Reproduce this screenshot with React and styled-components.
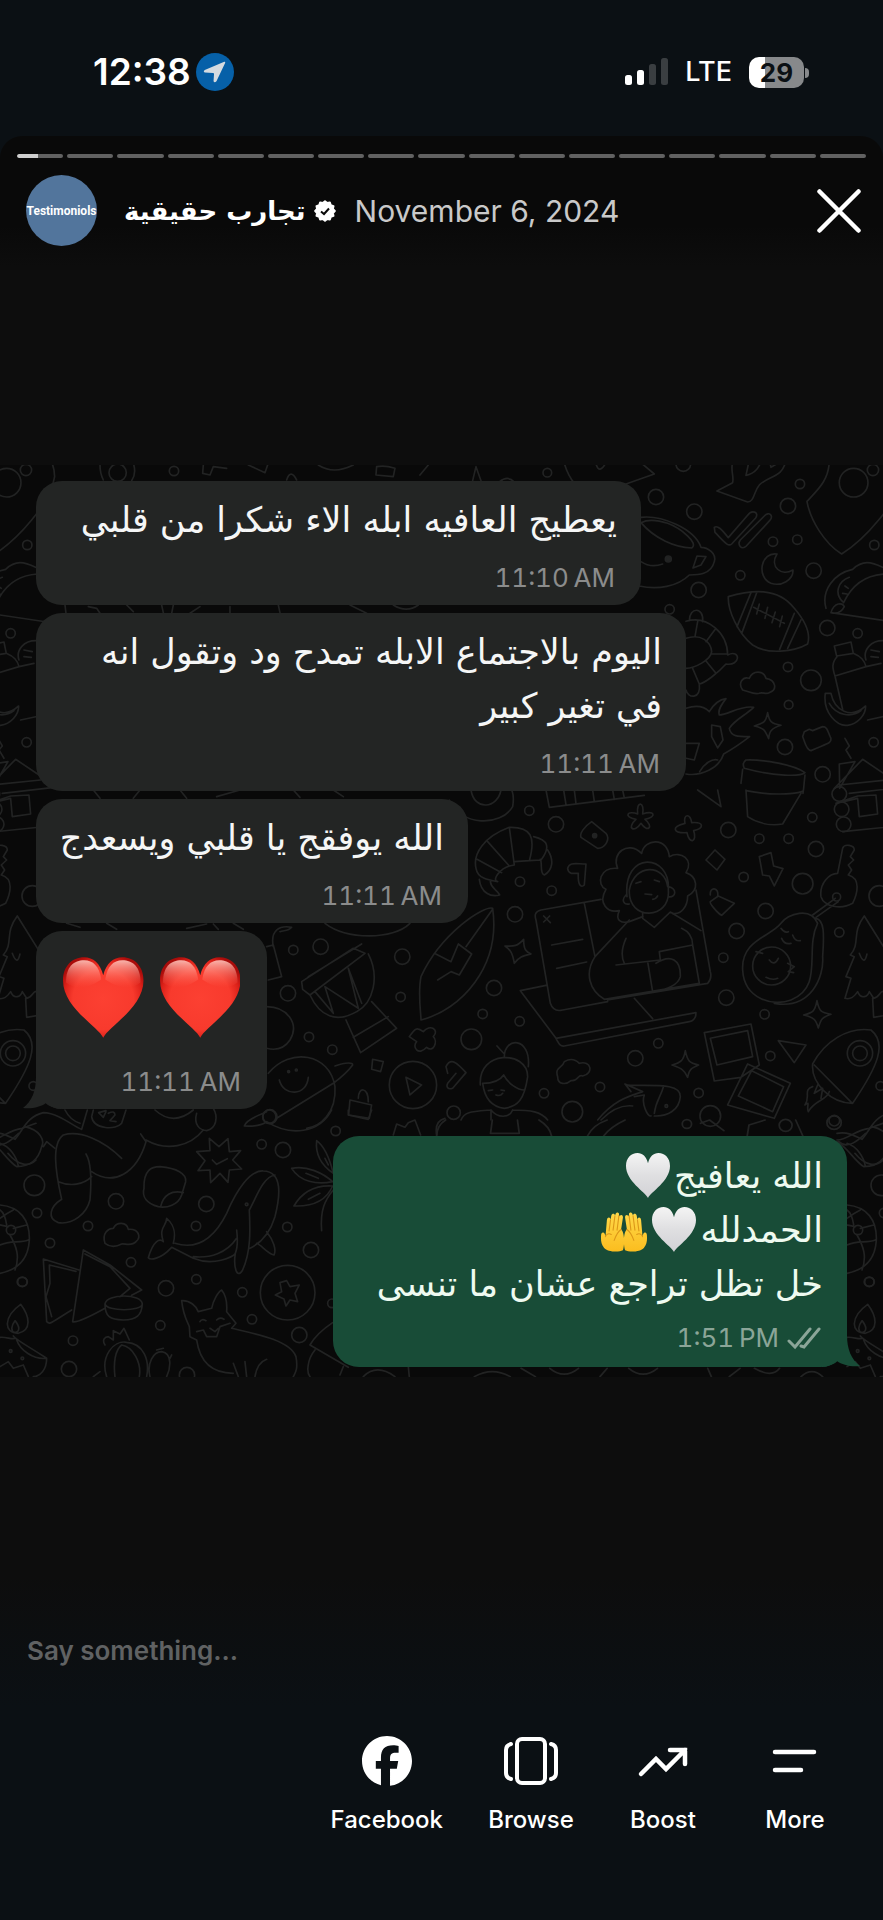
import { useState } from "react";
import styled, { createGlobalStyle } from "styled-components";
import { FaFacebook } from "react-icons/fa6";

const GlobalStyle = createGlobalStyle`
  * {
    box-sizing: border-box;
  }

  body {
    margin: 0;
    background-color: #0b1014;
    color: #ffffff;
    font-family: Inter, "DejaVu Sans", sans-serif;
  }

  button {
    padding: 0;
    border: none;
    background: none;
    color: inherit;
    font: inherit;
    cursor: pointer;
  }
`;

const Page = styled.div`
  display: flex;
  flex-direction: column;
  min-height: 100vh;
`;

const StatusBar = styled.header`
  display: flex;
  justify-content: space-between;
  align-items: center;
  height: 136px;
  padding: 8px 79px 0 93px;
`;

const StatusGroup = styled.div`
  display: flex;
  align-items: center;
  gap: ${({ $gap }) => $gap}px;
`;

const Clock = styled.time`
  font-size: 37px;
  font-weight: 600;
  line-height: 40px;
`;

const Network = styled.span`
  font-size: 27px;
  font-weight: 500;
  line-height: 32px;
`;

const Battery = styled.div`
  position: relative;
  width: 55px;
  height: 31px;
  border-radius: 10px;
  background: linear-gradient(to right, #ffffff 29%, #87898b 29%);
  color: #0b1014;
  font-size: 26px;
  font-weight: 700;
  line-height: 31px;
  text-align: center;

  &::after {
    content: "";
    position: absolute;
    top: 11px;
    right: -5px;
    width: 4px;
    height: 10px;
    border-radius: 0 5px 5px 0;
    background-color: #87898b;
  }
`;

const Story = styled.main`
  display: flex;
  flex: 1;
  flex-direction: column;
  border-radius: 22px 22px 0 0;
  background: linear-gradient(#090909 0, #090909 90px, #0d0d0d 130px, #0d0d0d calc(100% - 130px), #0b1014 100%);
`;

const Progress = styled.div`
  display: flex;
  gap: 4px;
  padding: 18px 17px 0;
`;

const Segment = styled.div`
  flex: 1;
  height: 4px;
  border-radius: 2px;
  background-color: #616161;
  overflow: hidden;
`;

const SegmentFill = styled.div`
  height: 100%;
  border-radius: 2px 0 0 2px;
  background-color: #cfcfcf;
`;

const StoryHeader = styled.div`
  display: flex;
  align-items: center;
  padding: 17px 22px 0 26px;
`;

const Avatar = styled.div`
  display: flex;
  justify-content: center;
  align-items: center;
  width: 71px;
  height: 71px;
  margin-right: 27px;
  border-radius: 50%;
  background-color: #52759c;
  font-family: Roboto, sans-serif;
  font-size: 12px;
  font-weight: 700;
`;

const Author = styled.h1`
  display: flex;
  align-items: center;
  gap: 8px;
  margin: 0 19px 0 0;
  font-family: "DejaVu Sans", sans-serif;
  font-size: 26px;
  font-weight: 700;
  line-height: 40px;
`;

const StoryDate = styled.time`
  flex: 1;
  color: #c9c9c9;
  font-size: 30px;
  line-height: 40px;
`;

const CloseButton = styled.button`
  width: 44px;
  height: 44px;
`;

const Stage = styled.section`
  display: flex;
  flex: 1;
  flex-direction: column;
  justify-content: center;
`;

const Chat = styled.div`
  position: relative;
  display: flex;
  flex-direction: column;
  align-items: flex-start;
  gap: 8px;
  padding: 16px 36px 10px;
  background-color: #090909;
  overflow: hidden;
`;

const Wallpaper = styled.svg`
  position: absolute;
  inset: 0;
  width: 100%;
  height: 100%;
`;

const Bubble = styled.article`
  position: relative;
  display: flex;
  flex-direction: column;
  width: ${({ $width }) => $width}px;
  max-width: 100%;
  margin-top: ${({ $mine }) => ($mine ? 19 : 0)}px;
  align-self: ${({ $mine }) => ($mine ? "flex-end" : "flex-start")};
  padding: ${({ $mine }) => ($mine ? "13px 24px 11px" : "12px 24px 9px")};
  border-radius: 26px;
  background-color: ${({ $mine }) => ($mine ? "#184c37" : "#232524")};
  color: ${({ $mine }) => ($mine ? "#eefaf0" : "#f5f6f6")};
`;

const Line = styled.p`
  height: 54px;
  margin: 0;
  font-family: "DejaVu Sans", sans-serif;
  font-size: 35px;
  line-height: 54px;
  white-space: nowrap;
`;

const HeartRow = styled.div`
  display: flex;
  gap: 16px;
  padding: 14px 3px 13px;
`;

const Meta = styled.div`
  display: flex;
  justify-content: flex-end;
  align-items: center;
  gap: 8px;
  padding: ${({ $mine }) => ($mine ? 9 : 13)}px 2px 0;
  color: ${({ $mine }) => ($mine ? "#8ba598" : "#8b8c8c")};
  font-size: 26px;
  line-height: 36px;
  font-variant-numeric: tabular-nums;
`;

const Tail = styled.svg`
  position: absolute;
  bottom: 0;
  ${({ $mine }) => ($mine ? "right: -13px; transform: scaleX(-1);" : "left: -13px;")}
`;

const InlineEmoji = styled.svg`
  margin-right: 4px;
  vertical-align: -10px;
`;

const Composer = styled.form`
  display: flex;
  align-items: center;
  height: 110px;
  padding: 0 27px;

  input {
    width: 100%;
    padding: 0;
    border: none;
    outline: none;
    background: none;
    color: #ffffff;
    font: 600 26px/36px Inter, sans-serif;
  }

  input::placeholder {
    color: #606263;
    opacity: 1;
  }
`;

const Toolbar = styled.nav`
  display: flex;
  justify-content: flex-end;
  align-items: flex-start;
  height: 214px;
  padding: 29px 22px 0;
`;

const ToolButton = styled.button`
  display: flex;
  flex-direction: column;
  align-items: center;
  gap: 17px;
  min-width: 132px;
  padding: 0 22px;

  span {
    font-size: 24px;
    font-weight: 500;
    line-height: 32px;
  }
`;

const ToolIcon = styled.div`
  display: flex;
  justify-content: center;
  align-items: center;
  height: 52px;
`;

const HEART =
  "M40 80C35 69 0 50 0 23C0 9 9 0 21 0C30 0 37 6 40 18C43 6 50 0 59 0C71 0 80 9 80 23C80 50 45 69 40 80Z";

const badgePoints = Array.from({ length: 24 }, (_, i) => {
  const angle = (i * Math.PI) / 12;
  const r = i % 2 ? 8.2 : 9.8;
  return `${11 + r * Math.cos(angle)},${11 + r * Math.sin(angle)}`;
}).join(" ");

const RedHeart = () => (
  <svg width="81" height="81" viewBox="0 0 80 80" role="img" aria-label="❤️">
    <defs>
      <radialGradient id="heartBody" cx="50%" cy="52%" r="58%">
        <stop offset="0" stopColor="#fc4032" />
        <stop offset="0.65" stopColor="#f83a2d" />
        <stop offset="0.85" stopColor="#dc2119" />
        <stop offset="1" stopColor="#a90c0a" />
      </radialGradient>
      <linearGradient id="heartShine" x1="0" y1="0" x2="0" y2="1">
        <stop offset="0" stopColor="#ffc6bd" stopOpacity="0.9" />
        <stop offset="1" stopColor="#ff6a59" stopOpacity="0" />
      </linearGradient>
    </defs>
    <path d={HEART} fill="url(#heartBody)" />
    <path d="M3 25C3 9 11 3 21 3C30 3 36 9 38 22C28 29 14 34 3 25Z" fill="url(#heartShine)" />
    <path d="M77 25C77 9 69 3 59 3C50 3 44 9 42 22C52 29 66 34 77 25Z" fill="url(#heartShine)" />
  </svg>
);

const WhiteHeart = () => (
  <InlineEmoji width="44" height="45" viewBox="0 0 80 80" preserveAspectRatio="none" role="img" aria-label="🤍">
    <defs>
      <linearGradient id="whiteHeart" x1="0" y1="0" x2="0" y2="1">
        <stop offset="0" stopColor="#f4f4f4" />
        <stop offset="0.5" stopColor="#dfdfe1" />
        <stop offset="1" stopColor="#d2d2d6" />
      </linearGradient>
    </defs>
    <path d={HEART} fill="url(#whiteHeart)" />
  </InlineEmoji>
);

const Hands = () => (
  <InlineEmoji width="48" height="40" viewBox="0 0 130 110" role="img" aria-label="🤲">
    <defs>
      <linearGradient id="skin" x1="0" y1="0" x2="0" y2="1">
        <stop offset="0" stopColor="#ffd94a" />
        <stop offset="1" stopColor="#fbbd1f" />
      </linearGradient>
      <g id="hand">
        <path
          d="M62 105C50 111 20 110 10 98C2 88 1 78 2 64C2 56 8 53 12 60L14 68L18 22C19 13 28 13 28 22L30 10C32 2 41 3 40 11L42 5C46-2 53 1 51 9L53 12C56 6 63 8 62 16L57 48C67 55 67 92 62 105Z"
          fill="url(#skin)"
        />
        <path
          d="M28 22L24 52M40 11L35 50M51 10L46 50M14 68C16 60 24 58 30 62M57 48C47 55 42 66 38 78"
          fill="none"
          stroke="#dc9719"
          strokeWidth="3"
          strokeLinecap="round"
        />
      </g>
    </defs>
    <use href="#hand" />
    <use href="#hand" transform="translate(130 0) scale(-1 1)" />
  </InlineEmoji>
);

// the groups are sketched at 3x, the tile repeats every 847px
const upperDots = [
  [319, 38, 13], [645, 111, 23], [760, 155, 23], [1041, 138, 23], [1077, 72, 14], [996, 245, 14],
  [1069, 239, 14], [898, 346, 14], [1118, 332, 23], [773, 390, 23], [686, 448, 14], [1159, 504, 23],
  [1250, 520, 14], [1041, 621, 14], [1110, 661, 31], [1043, 734, 13], [1032, 861, 23], [1298, 847, 14],
  [1145, 943, 23], [1300, 255, 14], [1238, 68, 43], [1296, 30, 17], [727, 12, 22],
];

const middleDots = [
  [265, 62, 14], [345, 103, 23], [237, 275, 14], [332, 302, 14], [222, 373, 23], [159, 594, 23],
  [125, 672, 14], [236, 694, 14], [91, 748, 31], [862, 120, 23], [955, 146, 14], [1043, 146, 14],
  [1114, 82, 14], [1125, 177, 23], [908, 261, 14], [1085, 281, 31], [1315, 318, 31], [974, 363, 23],
  [887, 423, 23], [847, 503, 14], [1195, 427, 14], [856, 623, 23], [971, 673, 14], [583, 805, 23],
  [652, 760, 14], [477, 891, 14], [309, 910, 14], [394, 965, 31], [773, 909, 14], [808, 978, 31],
  [988, 798, 14], [1318, 888, 13], [1180, 992, 16],
];

const leftDots = [
  [962, 470, 23], [880, 480, 14], [864, 610, 23], [1207, 500, 23], [1202, 621, 14],
  [927, 741, 14], [997, 779, 14],
];

const lowerDots = [
  [103, 226, 31], [348, 274, 23], [111, 309, 14], [264, 348, 14], [150, 399, 14], [67, 515, 14],
  [393, 457, 14], [619, 282, 23], [588, 348, 14], [785, 103, 14], [849, 120, 23], [1007, 63, 14],
  [862, 351, 14], [933, 420, 23], [498, 535, 23], [589, 508, 14], [727, 547, 14], [756, 628, 14],
  [481, 646, 14], [219, 692, 14], [207, 777, 23], [898, 675, 23], [561, 795, 23], [996, 580, 13],
];

const Dots = ({ items }) => items.map(([x, y, r]) => <circle key={`${x}-${y}`} cx={x} cy={y} r={r} />);

const Doodles = () => (
  <Wallpaper viewBox="0 465 883 912" preserveAspectRatio="xMidYMin slice" aria-hidden="true">
    <defs>
      <g id="doodles" fill="none" stroke="#222323" strokeWidth="5" strokeLinecap="round" strokeLinejoin="round">
        <g transform="translate(441 460) scale(.3333)">
          <Dots items={upperDots} />
          <path d="M1165 0C1165 60 1130 90 1098 124C1108 180 1150 250 1202 282C1270 240 1370 130 1382 50C1382 20 1370 0 1360-10" />
          <path d="M878 0C865 25 880 45 875 68L828 93L920 126C940 126 938 95 955 75C985 45 1025 55 1035 0M925 0L915 46C945 40 955 20 965-5M985 0L990 22L1010 10" />
          <path d="M95 62L105 20L120 62M370 10Q380 45 400 70M465 12Q475 45 495 8M590 0L640 42L555 72M175 66Q200 45 220 66" />
          <path d="M600 172C660 165 760 205 780 262C800 262 828 280 820 305C810 345 770 345 745 345C710 380 650 390 595 378M600 188C640 235 700 262 752 264C775 250 720 205 680 190C650 180 620 178 600 188M768 288L795 290L780 315L756 324ZM600 305Q630 325 665 312" />
          <circle cx="682" cy="297" r="9" fill="#222323" />
          <path d="M820 202C830 195 842 208 862 233L920 166C932 148 956 156 944 174L872 252C862 262 850 246 822 217ZM898 240L970 168C984 152 1000 168 986 182L916 258C902 272 888 255 898 240Z" />
          <path d="M1008 282C960 275 945 350 990 370C1020 380 1058 360 1056 330C1020 350 985 320 1008 282Z" />
          <path d="M862 410C930 390 1010 380 1060 445C1090 480 1110 520 1100 552C1060 575 980 585 935 555C890 520 860 450 862 410ZM930 398L888 500M948 396L903 518M1060 460L1016 568M1080 480L1040 565M938 442L1030 490M955 432L947 462M980 442L972 475M1003 456L993 488M1024 468L1016 500" />
          <path d="M1155 445C1140 390 1180 340 1235 328C1265 300 1290 305 1325 322M1170 458L1400 492M1170 458C1180 425 1205 428 1210 440C1200 460 1185 462 1170 458M1208 428C1235 370 1280 345 1330 342M1205 425C1180 400 1190 365 1225 352M1212 378L1222 385M1205 400L1218 402" />
          <path d="M1180 558L1230 546L1237 580L1187 588ZM1190 588C1170 610 1175 625 1182 648L1205 748M1237 580C1260 590 1270 600 1275 620L1182 648M1275 620L1320 610M1275 600C1265 570 1290 540 1330 542M1290 570L1315 575M1290 590L1312 592" />
          <path d="M1153 700C1145 760 1190 800 1220 796C1250 792 1275 765 1274 738C1230 780 1180 750 1170 700ZM1165 730C1185 765 1230 775 1260 752M1280 780L1350 765" />
          <path d="M745 482C745 440 790 440 785 485M735 484C800 465 860 520 860 585C900 565 900 620 855 612C830 640 790 670 775 672C780 720 740 715 735 690M735 535C780 520 810 545 812 575C810 600 760 625 735 625M770 485L762 530M825 505L795 545M860 582L812 582M825 640L795 603M775 672L755 625" />
          <path d="M905 690C890 670 905 648 925 655C935 630 968 630 975 655C1005 660 1010 690 985 698C975 705 965 695 955 700C940 705 925 695 905 690Z" />
          <path d="M735 745C765 735 790 740 805 755C820 730 840 718 855 716C840 735 830 750 835 765C860 765 900 735 938 742C915 765 880 780 865 805C870 830 890 830 926 830C900 850 870 870 848 882C835 925 780 950 735 942M812 795L838 800L846 840L830 864L812 830ZM735 850L775 850L760 900L735 895M776 935C790 910 815 895 830 900" />
          <path d="M980 758C985 785 990 790 1020 796C990 805 985 815 983 836C972 810 970 805 940 798C970 790 975 785 980 758Z" />
          <path d="M1090 815L1105 808L1115 812L1145 800C1160 800 1160 815 1170 835C1172 850 1160 850 1110 872C1095 872 1090 840 1085 830ZM1212 835L1225 858L1215 870L1230 895" />
          <path d="M915 900C970 898 1060 915 1092 938C1080 950 1000 950 910 925C905 915 908 905 915 900ZM905 928L900 970M1092 945L1088 985L1086 1000M1195 912L1242 905L1196 985ZM1180 985L1265 898L1350 955M1195 975L1340 960" />
        </g>
        <g transform="translate(441 790) scale(.3333)">
          <Dots items={middleDots} />
          <path d="M25 30C60 110 180 110 215 50C220 20 215 0 205-10M90 0C100 65 170 55 180 0M315 0L325 52L610 16M368 0L375 44M400 0L405 40M455 0L460 34M515 0L520 28M545 0L550 24M770 0L840 50L830 0" />
          <path d="M915 0L920 80C950 100 990 108 1025 102L1080 10M915 2C980 15 1050 15 1085 4" />
          <path d="M105 235C95 190 130 140 205 112L220 225L205 228C180 235 150 270 170 275C140 270 110 265 105 235ZM205 112C270 110 285 140 265 212L220 215M278 140C320 150 330 170 300 210L265 212M320 180C340 210 335 240 310 255C295 250 305 220 298 208M140 155L205 228M108 208L182 248M115 268C120 310 150 322 176 315C165 295 150 295 148 275" />
          <path d="M452 95L495 130C510 150 490 175 470 175L420 142C415 130 430 110 452 95ZM590 72C585 30 612 35 605 72C640 60 650 80 612 88C640 110 620 130 600 100C580 130 555 115 585 88C545 80 560 60 590 72ZM732 100C725 70 750 70 752 98C790 95 790 115 758 122C770 155 745 165 738 128C695 130 690 110 732 100Z" />
          <circle cx="461" cy="137" r="6" fill="#222323" />
          <path d="M795 210L822 180L852 208L828 240ZM955 200L990 188L998 228L1026 236L1000 288L985 258L965 255ZM380 235C385 215 405 222 435 222L430 285C420 295 410 285 412 250L390 250Q380 245 380 235M808 315C805 290 835 290 830 318M832 318L880 340L842 376C830 370 805 340 808 335ZM1190 250L1205 175C1210 160 1240 165 1240 180L1228 200L1238 210L1222 225L1232 240L1222 255C1260 265 1250 310 1235 340C1200 360 1150 350 1140 320C1135 280 1165 250 1190 250ZM1183 325L1115 375M1192 335L1125 382" />
          <circle cx="1187" cy="321" r="12" />
          <path d="M530 235C510 190 560 150 602 190C610 145 680 140 685 200C720 180 760 210 735 248C770 260 775 300 740 318C740 350 720 375 695 370M530 235C475 230 465 285 495 298C470 340 500 370 535 362C520 395 545 400 565 395L605 380" />
          <path d="M558 320C545 180 690 190 682 300C690 390 560 395 565 300C580 220 670 220 680 290M555 315C540 330 548 345 565 342M682 290C710 295 705 325 682 320M612 312L632 314M635 328Q645 328 650 318M585 280L600 275M640 270L655 275M605 368L605 385L640 412L688 366L780 422M565 390L462 500C430 550 445 600 490 628L775 580L755 465L655 485L658 510L525 525M555 445Q535 490 550 520M620 515L635 605M722 415Q755 430 755 465M645 520C690 490 720 510 718 560C710 590 670 600 635 605M500 630L800 580C810 570 812 560 808 545L765 300M480 328L300 360C282 365 280 375 285 390L328 640C335 660 350 664 365 660L500 635M430 340L462 500M332 465L425 448M347 535L437 516M308 378L328 398M308 396L326 378M315 586L238 602L345 745L765 668C765 680 762 692 745 695L370 768C360 770 355 765 345 745M580 625L635 686" />
          <path d="M155 355C130 345 0 430 -60 560C-70 610-60 670-60 690C60 660 180 530 155 355ZM155 358L75 470M-10 570L30 545L55 555L92 492L52 462L30 515L-20 490" />
          <path d="M248 448C248 480 255 485 270 492C245 498 235 500 220 520C215 492 210 480 192 468C220 470 230 468 248 448ZM733 782C740 815 745 818 773 825C750 835 745 838 740 862C730 838 720 835 693 825C720 818 728 812 733 782ZM1128 632C1135 665 1140 668 1170 673C1142 682 1140 688 1132 714C1125 688 1118 682 1088 675C1115 668 1122 665 1128 632Z" />
          <path d="M1130 400C1110 350 1040 370 1020 400C990 440 900 450 905 540C910 630 1000 650 1050 630C1150 590 1090 480 1130 400ZM1125 385C1150 390 1150 430 1145 500C1150 560 1110 660 1000 640M1020 415Q1030 430 1042 425M1022 445Q1030 465 1050 460M1055 435Q1062 455 1078 452M985 510Q1000 530 1012 505M975 562Q995 572 1010 565M945 485L965 490M1040 520L1060 530L1042 545L1058 548" />
          <circle cx="992" cy="528" r="57" />
          <path d="M1270 378C1230 430 1260 460 1228 495L1240 500L1215 560L1230 565L1212 625C1230 630 1240 620 1250 605C1260 630 1280 620 1285 605L1298 625C1320 620 1315 600 1330 605L1345 625C1360 620 1365 600 1380 600L1350 560L1360 550L1330 500L1340 490ZM1255 490Q1270 530 1278 492M1295 625L1298 682L1370 670" />
          <path d="M790 728L930 702L955 825L900 862L820 873ZM808 745L920 722L935 800L828 825ZM920 822L1048 880L1000 985L860 945ZM932 842L1028 890L995 965L892 918ZM1012 752L1095 765L1060 818Z" />
          <path d="M1115 822C1150 755 1220 710 1290 720C1340 760 1310 830 1235 940C1170 940 1110 880 1115 822ZM1120 825L1232 938M1115 890C1085 900 1110 920 1092 945C1110 930 1095 950 1102 965C1120 930 1160 930 1165 905M1130 885L1120 910L1145 895L1140 925" />
          <circle cx="1257" cy="790" r="38" />
          <circle cx="1257" cy="790" r="22" />
          <path d="M350 860C340 830 365 835 370 815C395 800 410 815 415 820C450 810 460 850 425 858C410 850 415 875 390 872C375 885 350 885 350 860ZM190 800C190 740 270 740 262 830M168 768L188 790M118 885C110 780 260 780 260 860C250 930 230 950 190 955C150 950 130 920 125 880C150 880 175 875 188 855C200 880 230 900 250 900M165 915Q178 920 185 910M142 902L155 900M180 900L190 902M150 960C170 985 205 985 215 960M60 990C70 965 90 965 150 960L150 990M215 960C270 960 300 965 320 990M20 850L15 830C30 800 50 820 75 848L35 895C20 900 15 890 20 880L45 850" />
          <path d="M470 990C520 930 560 920 605 905L552 882L570 905M560 885C620 890 720 875 718 920C715 960 680 980 640 978M580 920L610 915C600 940 620 980 630 978M668 888C660 920 645 930 640 970M480 990C520 950 550 945 575 948" />
          <circle cx="676" cy="948" r="4" />
          <circle cx="38" cy="968" r="20" />
          <path d="M1185 40L1250 25L1255 80L1310 72L1305 15L1250 18ZM1225 10L1400-10M1205 125L1400 105" />
          <circle cx="1195" cy="12" r="22" />
          <circle cx="1202" cy="58" r="22" />
          <circle cx="1208" cy="103" r="22" />
        </g>
        <g transform="translate(0 790) scale(.3333)">
          <Dots items={leftDots} />
          <path d="M820 470C810 420 840 405 875 412C865 425 850 420 840 425M800 470L820 465L845 560L805 570M800 650C860 650 900 700 870 750C850 780 820 780 800 775M975 400C1040 450 1180 450 1230 400" />
          <path d="M905 575L1060 475L1095 490L930 615L908 598ZM925 560L1085 462M930 615C960 680 1010 700 1070 665C1120 640 1140 560 1105 492M945 605L1000 670L975 590L1075 655L1045 535L1085 640M1038 690L1082 788L1190 715L1115 635M1060 742L1165 680M1075 655" />
          <path d="M1228 740C1245 715 1250 710 1270 725C1290 700 1320 720 1300 740C1315 755 1300 790 1280 772C1255 800 1235 770 1250 755ZM1218 862L1265 885L1230 915ZM1118 808L1150 815L1142 845L1115 838ZM1050 930L1115 945L1108 985L1046 975ZM1075 925C1075 890 1105 890 1105 935" />
          <circle cx="1239" cy="885" r="71" />
          <path d="M805 850C870 770 990 790 1005 890C1010 970 960 1010 920 1015M1005 828C1040 815 1060 818 1058 825C1040 850 1000 880 1000 880L830 985M838 870C850 920 920 920 925 862" />
          <circle cx="866" cy="845" r="3" />
          <circle cx="889" cy="840" r="3" />
          <circle cx="808" cy="980" r="20" />
          <path d="M280 0L300 25M420 0L400 25M540 0L560 25M650 20L720 0M880 0L900 22M1000 0L1030 20M200 400L240 412M320 400L350 418M560 415L620 402M640 402L655 418M700 400L730 418" />
        </g>
        <g transform="translate(0 460) scale(.3333)">
          <path d="M300 15Q300 40 310 60M400 10Q410 40 395 62M610 15L608 40L630 45L640 20L680 25M745 15L795 38L803 15M860 60Q872 25 890 60M955 15Q1000 45 1060 15M1130 20Q1155 15 1185 25L1180 50L1128 45ZM1285 15L1260 45M195 435L198 460M265 440L290 445L300 460M380 435L400 455M485 435L490 458M520 435L515 460M600 440L570 460M690 440L690 460M835 435L840 458M1050 435L1100 460M1180 435Q1220 460 1255 435" />
          <circle cx="353" cy="38" r="26" />
          <circle cx="522" cy="33" r="14" />
        </g>
        <g transform="translate(0 1110) scale(.3333)">
          <Dots items={lowerDots} />
          <path d="M-30 70C0 65 20 75 45 88C70 60 80 20 130 8C180 10 220 50 245 58L262 0M75 50C120 60 135 90 125 110C115 150 90 170 50 170C20 150 0 110-30 95M130 110L140 95L165 115M195 0Q210 30 240 40M245 58L255 25M280 0L275 20C280 60 350 60 365 40L378 0M0 100C30 110 50 140 55 168" />
          <path d="M365 145C310 90 240 60 190 75C155 100 165 180 185 268C150 290 140 325 175 338C220 345 260 310 270 270C275 210 275 160 258 132M175 215C210 230 250 225 275 200M275 185C340 230 410 190 438 95L422 72M438 90C500 125 570 110 610 60M465 0Q520 50 580 0M590 10C580 45 600 60 620 62C650 55 655 20 640-5" />
          <path d="M296 8L318 2M296 8L310 22L318 5M325 10Q345 0 345 15L330 32L348 35" />
          <path d="M733 48C740 25 790 12 800 5M733 48C760 50 790 45 800 35C870 80 960 70 995 0M1045 0L1045 15L1105 28L1115 0M1180 75L1190 42L1215 52L1225 38L1245 30L1262 75M1310 75C1305 45 1315 30 1335 25" />
          <circle cx="810" cy="20" r="21" />
          <path d="M590 125L630 122L628 85L657 110L684 86L688 125L722 122L698 150L725 177L688 180L684 217L660 190L632 218L630 180L594 182L615 152ZM637 150L650 163L682 146" />
          <path d="M432 235C430 180 455 170 480 170C530 175 560 190 557 215L545 255C535 285 500 295 475 290C440 280 425 260 432 235ZM482 290C490 255 515 240 550 248" />
          <path d="M525 400C590 420 640 390 680 310C710 240 750 180 790 183C850 185 840 260 825 320C810 370 780 400 750 415M825 195C790 200 770 260 748 300C750 350 755 420 728 480C710 510 700 470 706 430C700 440 640 470 580 445L515 412C480 450 450 450 445 443C460 390 480 385 490 395C475 350 500 350 500 325C530 350 525 380 520 400M710 360C715 400 710 420 706 430M580 440C630 445 680 430 710 385M800 365C820 390 830 420 822 435C800 430 785 405 770 400" />
          <circle cx="740" cy="283" r="4" />
          <path d="M950 92C975 110 990 150 1000 190C970 170 945 140 950 92ZM875 175C920 165 970 190 998 215C950 225 900 215 875 175ZM882 288C910 240 950 225 998 228C980 270 940 290 882 288ZM965 362C960 300 975 270 1000 240M918 190L955 205M925 268L960 250M975 145L985 165" />
          <path d="M315 400C305 370 325 355 340 355C350 335 380 335 385 358C415 355 425 380 408 395C395 410 375 400 365 402C350 410 330 412 315 400Z" />
          <path d="M130 447L237 480M130 447L140 635C150 645 150 640 215 600M148 465L150 520L138 560L155 620M148 465L228 484M250 420L218 635C230 640 270 620 315 595M250 420L330 465L425 540L395 556M255 432L330 470L390 535L360 560M315 582C320 550 425 550 427 582C425 605 320 605 315 582ZM315 582C315 620 330 630 370 630C410 630 425 615 427 582" />
          <path d="M0 285C60 290 90 330 88 390C85 450 50 480 0 490M0 325C20 310 40 300 40 300M25 350C0 345-20 340-30 340M30 375C50 410 60 440 45 480M0 405C30 390 60 400 85 390M40 355L80 345M20 345Q15 310 0 300" />
          <circle cx="33" cy="360" r="14" />
          <path d="M62 583C90 620 95 660 55 670C10 670 10 620 62 583ZM45 632C60 650 60 665 45 668C30 665 35 645 45 632ZM40 678C55 695 80 705 140 745C140 780 120 800 100 800M0 682C20 680 35 690 48 685M50 690C60 720 100 750 140 745M0 770L25 755L40 775L70 765L85 800" />
          <circle cx="32" cy="723" r="4" />
          <circle cx="67" cy="745" r="4" />
          <path d="M320 800C300 740 340 690 380 697C430 700 450 750 440 800M345 800C340 760 345 720 365 705C400 710 425 760 418 800M315 705C305 690 315 680 325 680L340 690L340 662L360 672L372 655L388 690M450 800C440 760 460 725 485 725C520 730 510 780 500 800M280 800L300 785M470 720L490 715M510 745L515 735" />
          <path d="M545 572C570 570 590 590 595 605L635 595C640 570 655 545 665 540C685 565 680 595 680 605L708 640L695 655C760 670 870 690 888 740C895 780 885 790 880 800M545 572C550 620 565 640 568 650L570 680L590 690C600 760 640 790 700 790M600 635Q605 625 618 632M650 630Q660 620 672 628M630 655L645 665L655 655M590 665L610 660L620 680L650 680L660 650L690 640M735 755L740 800M765 800C770 770 780 755 800 748M700 760L715 800" />
          <circle cx="863" cy="548" r="82" />
          <path d="M860 512L870 530L898 525L885 550L893 575L870 570L858 588L852 567L826 555L845 545L840 518ZM930 705C950 670 980 650 998 638M930 705L1045 772M945 720C920 750 920 790 930 800M1030 770L1020 795M1090 800Q1130 760 1185 800M1225 770L1228 800" />
        </g>
        <g transform="translate(320 1120) scale(.359 .3333)">
          <path d="M480 0L475 40L555 40L550 0M325 48C325 25 335 10 350 0M610 0Q640 20 645 48M745 48Q760 15 800 0M790 48Q810 20 850 0M1060 10L1085 0L1125 32M1190 48L1195 15L1240 0M1325 0L1345 48M1440 60C1470 60 1490 30 1530 25L1568 10M1445 65C1470 90 1500 60 1520 40M1490 100C1520 140 1550 140 1568 120" />
          <circle cx="1022" cy="12" r="13" />
          <circle cx="1297" cy="16" r="18" />
          <circle cx="1432" cy="8" r="20" />
          <circle cx="1530" cy="486" r="14" />
          <path d="M430 770Q480 740 530 770M560 745L600 770M640 745Q680 780 720 745M780 770L800 745M860 745Q900 780 940 745M1080 745L1090 770M1140 770L1170 745M1210 745Q1260 775 1280 745M1340 770Q1370 740 1400 770" />
        </g>
      </g>
    </defs>
    <use href="#doodles" />
    <use href="#doodles" x="-847" />
    <use href="#doodles" x="847" />
  </Wallpaper>
);

const BubbleTail = ({ mine }) => (
  <Tail $mine={mine} width="38" height="42" viewBox="0 0 38 42" fill={mine ? "#184c37" : "#232524"} aria-hidden="true">
    <path d="M13 0V10C13 24 9 34 0 41C9 42 18 40 23 36C28 40 33 42 38 42V0Z" />
  </Tail>
);

const messages = [
  { id: 1, width: 605, lines: ["يعطيج العافيه ابله الاء شكرا من قلبي"], time: "11:10\u202fAM" },
  { id: 2, width: 650, lines: ["اليوم بالاجتماع الابله تمدح ود وتقول انه", "في تغير كبير"], time: "11:11\u202fAM" },
  { id: 3, width: 432, lines: ["الله يوفقج يا قلبي ويسعدج"], time: "11:11\u202fAM" },
];

const TOTAL = 17;

const tools = [
  { name: "Facebook", icon: <FaFacebook size={50} /> },
  {
    name: "Browse",
    icon: (
      <svg width="54" height="52" viewBox="0 0 54 52" fill="none" stroke="#fff" strokeWidth="4" strokeLinecap="round">
        <rect x="13" y="4" width="28" height="44" rx="5" />
        <path d="M7 9C3 10 2 12 2 15V38C2 41 3 43 7 44M47 9C51 10 52 12 52 15V38C52 41 51 43 47 44" />
      </svg>
    ),
  },
  {
    name: "Boost",
    icon: (
      <svg width="52" height="52" viewBox="0 0 52 52" fill="none" stroke="#fff" strokeWidth="4.5" strokeLinecap="round">
        <path d="M4 39L19 24L29 34L48 15M33 15H48V29" />
      </svg>
    ),
  },
  {
    name: "More",
    icon: (
      <svg width="52" height="52" viewBox="0 0 52 52" fill="none" stroke="#fff" strokeWidth="4.5" strokeLinecap="round">
        <path d="M6 17H45M6 35H32" />
      </svg>
    ),
  },
];

const App = () => {
  const [reply, setReply] = useState("");

  const onChangeReply = (e) => {
    setReply(e.target.value);
  };

  return (
    <>
      <GlobalStyle />
      <Page>
        <StatusBar>
          <StatusGroup $gap={5}>
            <Clock>12:38</Clock>
            <svg width="38" height="38" viewBox="0 0 39 39" aria-hidden="true">
              <circle cx="19.5" cy="19.5" r="19.5" fill="#0660a8" />
              <path d="M29 9L9 17.5Q7 19 9 20L17.5 20.5Q18.5 20.5 18.5 21.5L18 29Q19 31 21 29L30 10Q30 8.5 29 9Z" fill="#d5dbe0" />
            </svg>
          </StatusGroup>
          <StatusGroup $gap={17}>
            <svg width="43" height="28" viewBox="0 0 43 28" fill="#fff" aria-hidden="true">
              <rect y="17" width="7" height="10" rx="2.5" />
              <rect x="12" y="12" width="7" height="15" rx="2.5" />
              <rect x="24" y="6" width="7" height="21" rx="2.5" fill="#3a3e41" />
              <rect x="36" width="7" height="27" rx="2.5" fill="#3a3e41" />
            </svg>
            <Network>LTE</Network>
            <Battery>29</Battery>
          </StatusGroup>
        </StatusBar>

        <Story>
          <Progress>
            {Array.from({ length: TOTAL }, (_, index) => (
              <Segment key={index}>{index === 0 && <SegmentFill style={{ width: "46%" }} />}</Segment>
            ))}
          </Progress>
          <StoryHeader>
            <Avatar>Testimoniols</Avatar>
            <Author>
              <span dir="rtl">تجارب حقيقية</span>
              <svg width="22" height="22" viewBox="0 0 22 22" aria-label="Verified">
                <polygon points={badgePoints} fill="#fff" stroke="#fff" strokeWidth="2" strokeLinejoin="round" />
                <path d="M7 11.5L10 14L15 8.5" fill="none" stroke="#090909" strokeWidth="2" />
              </svg>
            </Author>
            <StoryDate dateTime="2024-11-06">November 6, 2024</StoryDate>
            <CloseButton type="button" aria-label="Close">
              <svg width="44" height="44" viewBox="0 0 44 44" stroke="#fff" strokeWidth="4.5" strokeLinecap="round">
                <path d="M2.5 2.5L41.5 41.5M41.5 2.5L2.5 41.5" />
              </svg>
            </CloseButton>
          </StoryHeader>

          <Stage>
            <Chat>
              <Doodles />
              {messages.map((message) => (
                <Bubble key={message.id} $width={message.width}>
                  {message.lines.map((line) => (
                    <Line key={line} dir="rtl">
                      {line}
                    </Line>
                  ))}
                  <Meta>{message.time}</Meta>
                </Bubble>
              ))}
              <Bubble $width={231}>
                <BubbleTail />
                <HeartRow>
                  <RedHeart />
                  <RedHeart />
                </HeartRow>
                <Meta>11:11{"\u202f"}AM</Meta>
              </Bubble>
              <Bubble $mine $width={514}>
                <BubbleTail mine />
                <Line dir="rtl">
                  الله يعافيج
                  <WhiteHeart />
                </Line>
                <Line dir="rtl">
                  الحمدلله
                  <WhiteHeart />
                  <Hands />
                </Line>
                <Line dir="rtl">خل تظل تراجع عشان ما تنسى</Line>
                <Meta $mine>
                  1:51{"\u202f"}PM
                  <svg width="34" height="24" viewBox="0 0 34 24" fill="none" stroke="#8ba598" strokeWidth="3" strokeLinecap="round">
                    <path d="M2 15L8 21L23 3M14 20L17 21L32 3" />
                  </svg>
                </Meta>
              </Bubble>
            </Chat>
          </Stage>

          <Composer onSubmit={(e) => e.preventDefault()}>
            <input
              type="text"
              aria-label="Say something"
              placeholder="Say something..."
              value={reply}
              onChange={onChangeReply}
            />
          </Composer>
        </Story>

        <Toolbar>
          {tools.map((tool) => (
            <ToolButton key={tool.name} type="button">
              <ToolIcon>{tool.icon}</ToolIcon>
              <span>{tool.name}</span>
            </ToolButton>
          ))}
        </Toolbar>
      </Page>
    </>
  );
};

export default App;
